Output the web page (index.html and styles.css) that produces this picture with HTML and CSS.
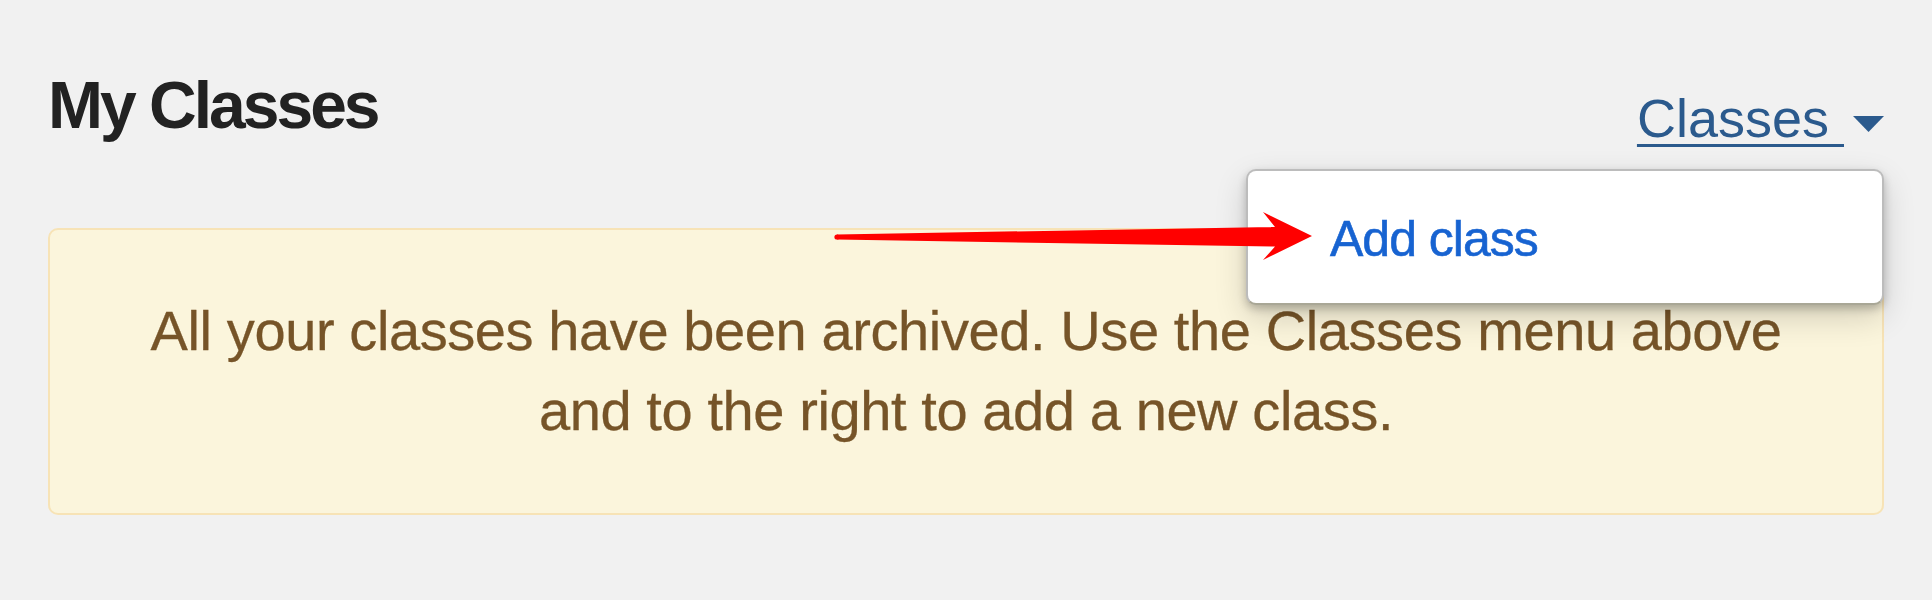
FILE: index.html
```html
<!DOCTYPE html>
<html>
<head>
<meta charset="utf-8">
<title>My Classes</title>
<link rel="stylesheet" href="styles.css">
</head>
<body>
<div class="page">
  <div class="header">
    <h1 class="title">My Classes</h1>
    <div class="menu">
      <div class="toggle">
        <a class="toggle-link" href="#">Classes&nbsp;</a>
        <svg class="caret" width="31" height="16" viewBox="0 0 31 16"><polygon points="0,0 31,0 15.5,16" fill="#2b5a8d"/></svg>
      </div>
      <div class="dropdown">
        <a class="dropdown-item" href="#">Add class</a>
      </div>
    </div>
  </div>
  <div class="notice">
    <p class="notice-text">All your classes have been archived. Use the Classes menu above and to the right to add a new class.</p>
  </div>
</div>
<svg class="annotation" width="1932" height="600" viewBox="0 0 1932 600">
  <circle cx="837" cy="237" r="2.6" fill="#ff0000"/>
  <polygon points="837,234.4 1275,227 1263,212 1312,236 1263,260 1275,246.5 837,239.6" fill="#ff0000"/>
</svg>
</body>
</html>
```

FILE: styles.css
```css
body {
  margin: 0;
  background: #f1f1f1;
  font-family: "Liberation Sans", Arial, sans-serif;
  position: relative;
}
.page {
  padding: 65px 48px 0;
}
.header {
  display: flex;
  justify-content: space-between;
  align-items: flex-start;
}
.title {
  margin: 0;
  font-size: 66px;
  line-height: 80px;
  font-weight: bold;
  letter-spacing: -3px;
  color: #222;
}
.menu {
  position: relative;
  margin-top: 21px;
}
.toggle {
  display: flex;
  align-items: flex-start;
}
.toggle-link {
  font-size: 54px;
  line-height: 64px;
  color: #2b5a8d;
  text-decoration: underline;
  text-decoration-thickness: 3px;
  text-underline-offset: 7px;
}
.caret {
  display: block;
  margin-top: 30px;
  margin-left: 9px;
}
.dropdown {
  position: absolute;
  right: 0;
  top: calc(100% + 19px);
  width: 638px;
  padding: 38px 0 34px 82px;
  box-sizing: border-box;
  background: #fff;
  border: 2px solid #bcbcbc;
  border-bottom-color: #a9a796;
  border-radius: 10px;
  box-shadow: 0 4px 8px rgba(0, 0, 0, 0.22), 0 12px 32px rgba(0, 0, 0, 0.16);
  z-index: 2;
}
.dropdown-item {
  display: block;
  font-size: 50px;
  line-height: 60px;
  letter-spacing: -1px;
  color: #1763d1;
  -webkit-text-stroke: 0.6px #1763d1;
  text-decoration: none;
}
.notice {
  margin-top: 78px;
  height: 287px;
  box-sizing: border-box;
  padding: 61px 20px 0;
  background: #fbf5dc;
  border: 2px solid #f7e3b6;
  border-radius: 10px;
}
.notice-text {
  margin: 0 auto;
  max-width: 1680px;
  font-size: 56px;
  line-height: 80px;
  letter-spacing: -0.4px;
  text-align: center;
  color: #765428;
  -webkit-text-stroke: 0.3px #765428;
}
.annotation {
  position: absolute;
  top: 0;
  left: 0;
  pointer-events: none;
  z-index: 3;
}
```
